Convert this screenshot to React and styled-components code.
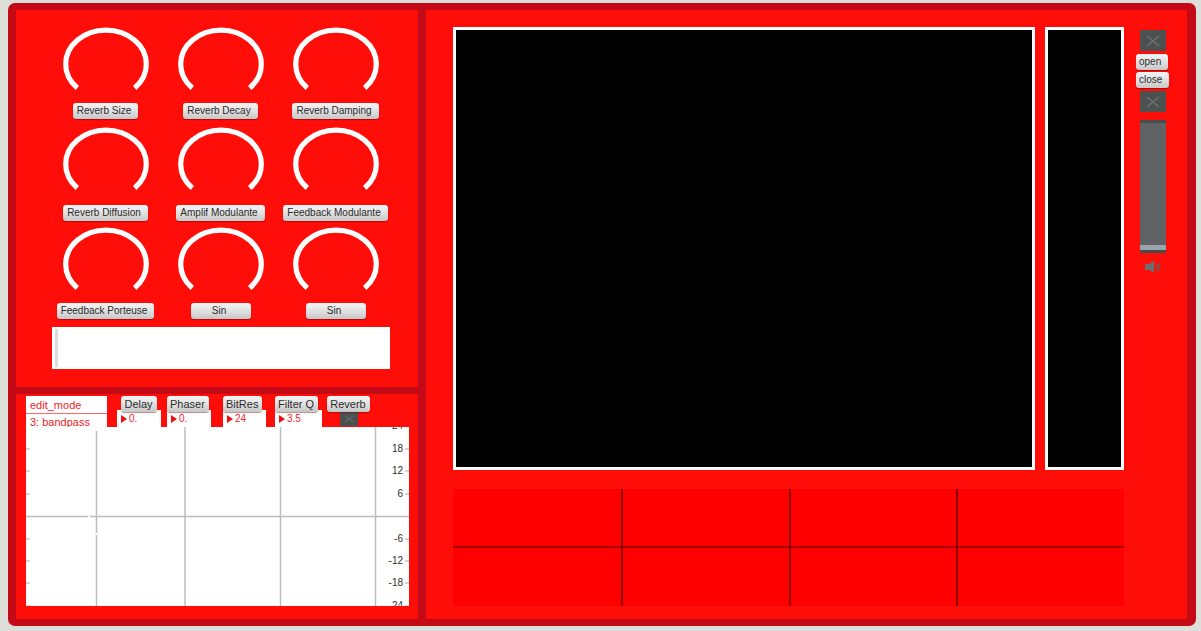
import React from "react";
import styled, { createGlobalStyle, css } from "styled-components";

const Global = createGlobalStyle`
  *, *::before, *::after { box-sizing: border-box; }
  body {
    margin: 0;
    background: #dfdfd9;
    font-family: "Liberation Sans", Arial, sans-serif;
    font-size: 10px;
    color: #2c2c2c;
  }
  button, input, select { font: inherit; color: inherit; margin: 0; }
`;

const Page = styled.main`
  padding: 3px 5px 5px 8px;
`;

const Frame = styled.div`
  display: grid;
  grid-template-columns: 402px minmax(0, 1fr);
  gap: 8px;
  padding: 7px 9px 7px 8px;
  border-radius: 7px;
  background: #c40a17;
`;

const LeftColumn = styled.div`
  display: flex;
  flex-direction: column;
  gap: 7px;
`;

const Panel = styled.section`
  background: #ff0d08;
`;

const KnobPanel = styled(Panel)`
  padding: 17px 28px 18px 32px;
`;

const KnobGrid = styled.div`
  display: grid;
  grid-template-columns: repeat(3, 115px);
  grid-auto-rows: 100px;
`;

const KnobCell = styled.div`
  display: flex;
  flex-direction: column;
  align-items: center;
  gap: ${(p) => (p.$loose ? 16 : 14)}px;
`;

const Dial = styled.div`
  display: grid;
  width: 86px;
  height: 62px;
  & > * { grid-area: 1 / 1; }
  svg { display: block; overflow: visible; }
  input { width: 100%; height: 100%; opacity: 0; }
`;

const Button = styled.button`
  height: 16px;
  min-width: ${(p) => (p.$wide ? "60px" : "0")};
  flex: none;
  padding: 0 7px 0 ${(p) => (p.$snug ? 3 : 4)}px;
  border: 0;
  border-radius: 3px;
  background: linear-gradient(#f6f6f6, #dcdcdc 60%, #c6c6c6);
  box-shadow: 0 1px 1px rgba(90, 0, 0, 0.45);
  line-height: 16px;
  white-space: nowrap;
  text-align: center;
`;

const TabButton = styled(Button)`
  position: relative;
  padding: 0 4px 0 3px;
  font-size: 11px;
`;

const Score = styled.div`
  height: 42px;
  margin-left: 4px;
  padding: 2px 3px;
  background: #fff;
  &::before {
    content: "";
    display: block;
    width: 3px;
    height: 38px;
    background: #dcdcdc;
  }
`;

const FilterPanel = styled(Panel)`
  padding: 2px 9px 13px 10px;
`;

const Strip = styled.div`
  display: grid;
  grid-template-columns: 91px 50px 56px 52px 52px 43px;
  height: 31px;
`;

const Menus = styled.div`
  display: flex;
  flex-direction: column;
  gap: 1px;
  width: 81px;
  background: #ff6a66;
`;

const Menu = styled.select`
  appearance: none;
  width: 100%;
  height: ${(p) => (p.$low ? 13 : 17)}px;
  padding: ${(p) => (p.$low ? 2 : 1)}px 4px 0;
  border: 0;
  border-radius: 0;
  background: #fff;
  color: #f0232a;
  font-size: 11px;
  line-height: 13px;
`;

const Param = styled.div`
  display: flex;
  flex-direction: column;
  align-items: ${(p) => (p.$center ? "center" : "flex-start")};
  width: ${(p) => p.$width}px;
`;

const NumberBox = styled.div`
  display: flex;
  align-items: center;
  gap: 2px;
  width: 100%;
  height: 17px;
  margin-top: -2px;
  padding: 0 4px;
  background: #fff;
  svg { flex: none; }
  input {
    width: 100%;
    min-width: 0;
    height: 17px;
    padding: 0;
    border: 0;
    background: transparent;
    color: #f0232a;
  }
`;

const ToggleBox = styled.label`
  display: grid;
  width: ${(p) => (p.$small ? 18 : 26)}px;
  height: ${(p) => (p.$small ? 14 : 21)}px;
  background: #4c504f;
  & > * { grid-area: 1 / 1; place-self: center; }
  input { appearance: none; width: 100%; height: 100%; margin: 0; }
  svg { pointer-events: none; }
`;

const Graph = styled.svg`
  display: block;
  width: 100%;
  height: 179px;
  background: #fff;
  overflow: hidden;
`;

const ScopePanel = styled(Panel)`
  display: grid;
  grid-template-columns: minmax(0, 1fr) 33px;
  gap: 12px;
  padding: 17px 18px 13px 27px;
`;

const Main = styled.div`
  display: flex;
  flex-direction: column;
  gap: 19px;
`;

const Screens = styled.div`
  display: grid;
  grid-template-columns: minmax(0, 1fr) 79px;
  gap: 10px;
  height: 443px;
`;

const Screen = styled.div`
  border: 3px solid #fff;
  background: #000;
`;

const PadGrid = styled.div`
  display: grid;
  grid-template-columns: repeat(4, 1fr);
  grid-template-rows: 1fr 1fr;
  height: 117px;
  background: #f00;
`;

const Pad = styled.div`
  ${(p) => p.$left && css`border-left: 2px solid #8c0000;`}
  ${(p) => p.$bottom && css`border-bottom: 2px solid #a80000;`}
`;

const Side = styled.div`
  display: flex;
  flex-direction: column;
  gap: 3px;
  padding-top: 3px;
`;

const SideButtons = styled.div`
  display: flex;
  flex-direction: column;
  align-items: flex-start;
  gap: 2px;
`;

const SideBlock = styled.div`
  display: flex;
  flex-direction: column;
  align-items: flex-start;
  gap: 8px;
  padding-left: 4px;
`;

const Fader = styled.input`
  appearance: none;
  writing-mode: vertical-lr;
  direction: rtl;
  width: 26px;
  height: 133px;
  padding: 0;
  border-top: 3px solid #494b4c;
  border-bottom: 3px solid #494b4c;
  background: #606265;
  &::-webkit-slider-thumb {
    appearance: none;
    width: 26px;
    height: 5px;
    background: #98a5aa;
  }
`;

const SpeakerIcon = styled.svg`
  display: block;
  margin-left: 5px;
`;

const knobs = [
  "Reverb Size", "Reverb Decay", "Reverb Damping",
  "Reverb Diffusion", "Amplif Modulante", "Feedback Modulante",
  "Feedback Porteuse", "Sin", "Sin",
];

const params = [
  { name: "Delay", value: "0.", width: 44, center: true },
  { name: "Phaser", value: "0.", width: 44 },
  { name: "BitRes", value: "24", width: 43 },
  { name: "Filter Q", value: "3.5", width: 47 },
];

const levels = [
  [24, -1], [18, 22], [12, 44], [6, 67], [-6, 112], [-12, 134], [-18, 156], [-24, 179],
];

function Toggle({ small, label }) {
  return (
    <ToggleBox $small={small}>
      <input type="checkbox" aria-label={label} />
      <svg width={small ? 10 : 14} height={small ? 8 : 12} viewBox="0 0 14 12" preserveAspectRatio="none">
        <path d="M1 1L13 11M13 1L1 11" stroke="#6c7273" strokeWidth="1.4" />
      </svg>
    </ToggleBox>
  );
}

function Knob({ name, loose }) {
  return (
    <KnobCell $loose={loose}>
      <Dial>
        <svg width="86" height="62" aria-hidden="true">
          <path d="M14.3 61A40.3 34 0 1 1 71.7 61" fill="none" stroke="#fff" strokeWidth="5.2" />
        </svg>
        <input type="range" defaultValue="0" aria-label={name} />
      </Dial>
      <Button type="button" $wide={name === "Sin"}>{name}</Button>
    </KnobCell>
  );
}

function FilterGraph() {
  return (
    <Graph viewBox="0 0 383 179" preserveAspectRatio="none" role="img" aria-label="Filter response">
      <g stroke="#bdbdbd" strokeWidth="1.5">
        <path d="M70.5 4V179M159 0V179M254.5 0V179M349.5 0V179M0 89.5H383" />
      </g>
      <path d="M62 89.5H64M70.5 106V108" stroke="#fff" strokeWidth="2" />
      {levels.map(([db, y]) => (
        <g key={db}>
          <path d={`M0 ${y}H4M379 ${y}H383`} stroke="#aaa" strokeWidth="1" />
          <text x="377" y={y + 3} textAnchor="end" fontSize="10" fill="#2c2c2c">{db}</text>
        </g>
      ))}
    </Graph>
  );
}

export default function App() {
  return (
    <Page>
      <Global />
      <Frame>
        <LeftColumn>
          <KnobPanel aria-label="Effects">
            <KnobGrid>
              {knobs.map((name, i) => (
                <Knob key={i} name={name} loose={i > 2 && i < 6} />
              ))}
            </KnobGrid>
            <Score />
          </KnobPanel>
          <FilterPanel aria-label="Filter">
            <Strip>
              <Menus>
                <Menu aria-label="Mode"><option>edit_mode</option></Menu>
                <Menu $low aria-label="Filter type"><option>3: bandpass</option></Menu>
              </Menus>
              {params.map((p) => (
                <Param key={p.name} $width={p.width} $center={p.center}>
                  <TabButton type="button">{p.name}</TabButton>
                  <NumberBox>
                    <svg width="6" height="8" aria-hidden="true"><path d="M0 0L6 4L0 8Z" fill="#f00c10" /></svg>
                    <input type="text" defaultValue={p.value} aria-label={p.name} />
                  </NumberBox>
                </Param>
              ))}
              <Param $width={43} $center>
                <TabButton type="button">Reverb</TabButton>
                <Toggle small label="Reverb on" />
              </Param>
            </Strip>
            <FilterGraph />
          </FilterPanel>
        </LeftColumn>
        <ScopePanel aria-label="Scope">
          <Main>
            <Screens>
              <Screen />
              <Screen />
            </Screens>
            <PadGrid>
              {Array.from({ length: 8 }, (_, i) => (
                <Pad key={i} $left={i % 4 > 0} $bottom={i < 4} />
              ))}
            </PadGrid>
          </Main>
          <Side>
            <SideBlock><Toggle label="Input on" /></SideBlock>
            <SideButtons>
              <Button type="button" $snug>open</Button>
              <Button type="button" $snug>close</Button>
            </SideButtons>
            <SideBlock>
              <Toggle label="Playback on" />
              <Fader type="range" min="0" max="100" defaultValue="0" aria-label="Volume" />
              <SpeakerIcon width="17" height="12" viewBox="0 0 17 12" aria-hidden="true">
                <path d="M0 3H4L9 0V12L4 9H0Z" fill="#6b6d6f" />
                <path d="M10.5 3Q12.5 6 10.5 9M12.5 2Q16.5 6 12.5 10" fill="none" stroke="#8b4a49" strokeWidth="1.8" />
              </SpeakerIcon>
            </SideBlock>
          </Side>
        </ScopePanel>
      </Frame>
    </Page>
  );
}
